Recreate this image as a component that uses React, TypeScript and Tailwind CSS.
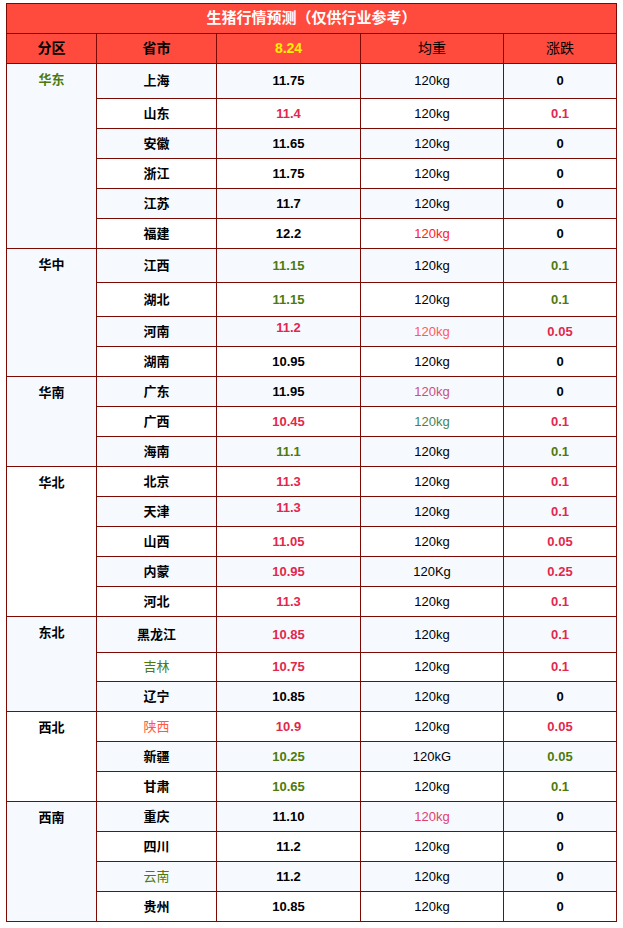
const RED = 'text-[#e3274c]';
const GREEN = 'text-[#4e7a0c]';

type Row = {
  area?: string;
  span?: number;
  areaColor?: string;
  prov: string;
  provClass?: string;
  price: string;
  priceClass?: string;
  weight?: string;
  weightClass?: string;
  change: string;
  changeClass?: string;
  h: string;
};

const rows: Row[] = [
  { area: '华东', span: 6, areaColor: GREEN, prov: '上海', price: '11.75', change: '0', h: 'h-[35px]' },
  { prov: '山东', price: '11.4', priceClass: RED, change: '0.1', changeClass: RED, h: 'h-[30px]' },
  { prov: '安徽', price: '11.65', change: '0', h: 'h-[30px]' },
  { prov: '浙江', price: '11.75', change: '0', h: 'h-[30px]' },
  { prov: '江苏', price: '11.7', change: '0', h: 'h-[30px]' },
  { prov: '福建', price: '12.2', weightClass: 'text-[#ff1a1a]', change: '0', h: 'h-[30px]' },
  { area: '华中', span: 4, prov: '江西', price: '11.15', priceClass: GREEN, change: '0.1', changeClass: GREEN, h: 'h-[34px]' },
  { prov: '湖北', price: '11.15', priceClass: GREEN, change: '0.1', changeClass: GREEN, h: 'h-[34px]' },
  { prov: '河南', price: '11.2', priceClass: `${RED} pb-[7px]`, weightClass: 'text-[#ff5a5a]', change: '0.05', changeClass: RED, h: 'h-[30px]' },
  { prov: '湖南', price: '10.95', change: '0', h: 'h-[30px]' },
  { area: '华南', span: 3, prov: '广东', price: '11.95', weightClass: 'text-[#c8507e]', change: '0', h: 'h-[30px]' },
  { prov: '广西', price: '10.45', priceClass: RED, weightClass: 'text-[#3f8656]', change: '0.1', changeClass: RED, h: 'h-[30px]' },
  { prov: '海南', price: '11.1', priceClass: GREEN, change: '0.1', changeClass: GREEN, h: 'h-[30px]' },
  { area: '华北', span: 5, prov: '北京', price: '11.3', priceClass: RED, change: '0.1', changeClass: RED, h: 'h-[30px]' },
  { prov: '天津', price: '11.3', priceClass: `${RED} pb-[7px]`, change: '0.1', changeClass: RED, h: 'h-[30px]' },
  { prov: '山西', price: '11.05', priceClass: RED, change: '0.05', changeClass: RED, h: 'h-[30px]' },
  { prov: '内蒙', price: '10.95', priceClass: RED, weight: '120Kg', change: '0.25', changeClass: RED, h: 'h-[30px]' },
  { prov: '河北', price: '11.3', priceClass: RED, change: '0.1', changeClass: RED, h: 'h-[30px]' },
  { area: '东北', span: 3, prov: '黑龙江', price: '10.85', priceClass: RED, change: '0.1', changeClass: RED, h: 'h-[36px]' },
  { prov: '吉林', provClass: `${GREEN} font-normal`, price: '10.75', priceClass: RED, change: '0.1', changeClass: RED, h: 'h-[29px]' },
  { prov: '辽宁', price: '10.85', change: '0', h: 'h-[30px]' },
  { area: '西北', span: 3, prov: '陕西', provClass: 'text-[#ff5a45] font-normal', price: '10.9', priceClass: RED, change: '0.05', changeClass: RED, h: 'h-[30px]' },
  { prov: '新疆', price: '10.25', priceClass: GREEN, weight: '120kG', change: '0.05', changeClass: GREEN, h: 'h-[30px]' },
  { prov: '甘肃', price: '10.65', priceClass: GREEN, change: '0.1', changeClass: GREEN, h: 'h-[30px]' },
  { area: '西南', span: 4, prov: '重庆', price: '11.10', weightClass: 'text-[#e0406e]', change: '0', h: 'h-[30px]' },
  { prov: '四川', price: '11.2', change: '0', h: 'h-[30px]' },
  { prov: '云南', provClass: `${GREEN} font-normal`, price: '11.2', change: '0', h: 'h-[30px]' },
  { prov: '贵州', price: '10.85', change: '0', h: 'h-[30px]' },
];

const cell = 'border border-[#7c0a02] text-center p-0';

export default function App() {
  return (
    <div
      className="min-h-[928px] w-[623px] bg-white pt-[3px] pl-[6px] text-[13px] text-black"
      style={{ fontFamily: '"Liberation Sans", "Noto Sans CJK SC", sans-serif' }}
    >
      <table className="w-[610px] table-fixed border-collapse border border-[#7c0a02]">
        <colgroup>
          <col className="w-[90px]" />
          <col className="w-[120px]" />
          <col className="w-[144px]" />
          <col className="w-[143px]" />
          <col className="w-[113px]" />
        </colgroup>
        <thead>
          <tr className="h-[30px] bg-[#ff4b3e]">
            <th colSpan={5} className={`${cell} text-[15px] font-bold text-white`}>
              生猪行情预测（仅供行业参考）
            </th>
          </tr>
          <tr className="h-[30px] bg-[#ff4b3e] text-[14px] font-bold">
            <th className={cell}>分区</th>
            <th className={cell}>省市</th>
            <th className={`${cell} text-[#ffee00]`}>8.24</th>
            <th className={`${cell} font-normal`}>均重</th>
            <th className={`${cell} font-normal`}>涨跌</th>
          </tr>
        </thead>
        <tbody>
          {rows.map((r, i) => (
            <tr key={r.prov} className={`${r.h} ${i % 2 === 0 ? 'bg-[#f6faff]' : 'bg-white'}`}>
              {r.area && (
                <td rowSpan={r.span} className={`${cell} align-top pt-[6px] font-bold ${r.areaColor ?? ''}`}>
                  {r.area}
                </td>
              )}
              <td className={`${cell} font-bold ${r.provClass ?? ''}`}>{r.prov}</td>
              <td className={`${cell} font-bold ${r.priceClass ?? ''}`}>{r.price}</td>
              <td className={`${cell} ${r.weightClass ?? ''}`}>{r.weight ?? '120kg'}</td>
              <td className={`${cell} font-bold ${r.changeClass ?? ''}`}>{r.change}</td>
            </tr>
          ))}
        </tbody>
      </table>
    </div>
  );
}
